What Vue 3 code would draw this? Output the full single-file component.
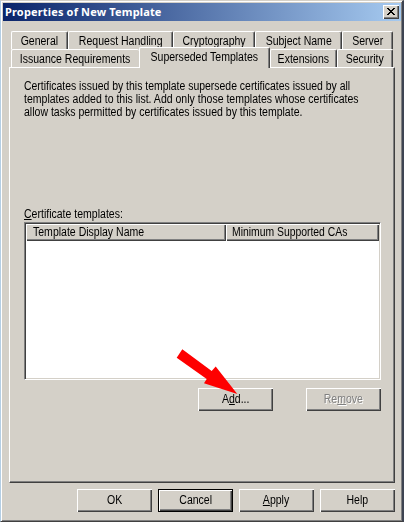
<script setup>
const backTabs = [
  { label: 'General', width: 57 },
  { label: 'Request Handling', width: 105 },
  { label: 'Cryptography', width: 82 },
  { label: 'Subject Name', width: 87 },
  { label: 'Server', width: 51 },
]
const frontTabs = [
  { label: 'Issuance Requirements', width: 128, covered: true },
  { label: 'Superseded Templates', width: 131, active: true },
  { label: 'Extensions', width: 67 },
  { label: 'Security', width: 56 },
]
</script>

<template>
  <div class="dialog">
    <header class="titlebar">
      <span class="title">Properties of New Template</span>
      <button class="close" aria-label="Close">
        <svg width="8" height="7" viewBox="0 0 8 7" shape-rendering="crispEdges">
          <path d="M0 0h2v1h1v1h2v-1h1v-1h2v1h-1v1h-1v1h-1v1h1v1h1v1h1v1h-2v-1h-1v-1h-2v1h-1v1h-2v-1h1v-1h1v-1h1v-1h-1v-1h-1v-1h-1z" fill="#000" />
        </svg>
      </button>
    </header>

    <nav class="tabs">
      <div class="tabrow">
        <div v-for="t in backTabs" :key="t.label" class="tab" :style="{ width: t.width + 'px' }">
          <span class="cap">{{ t.label }}</span>
        </div>
      </div>
      <div class="tabrow">
        <div v-for="t in frontTabs" :key="t.label" class="tab" :class="{ active: t.active, covered: t.covered }" :style="{ width: t.width + 'px' }">
          <span class="cap">{{ t.label }}</span>
        </div>
      </div>
    </nav>

    <main class="panel">
      <p class="intro">
        <span class="cap left l1">Certificates issued by this template supersede certificates issued by all</span>
        <span class="cap left l2">templates added to this list. Add only those templates whose certificates</span>
        <span class="cap left">allow tasks permitted by certificates issued by this template.</span>
      </p>
      <label class="list-label"><span class="cap left"><u>C</u>ertificate templates:</span></label>
      <div class="list">
        <div class="list-head">
          <div class="col first"><span class="cap left">Template Display Name</span></div>
          <div class="col second"><span class="cap left c2">Minimum Supported CAs</span></div>
        </div>
      </div>
      <div class="actions">
        <button class="btn"><span class="cap">A<u>d</u>d...</span></button>
        <button class="btn disabled"><span class="cap">Re<u>m</u>ove</span></button>
      </div>
      <svg class="arrow" width="62" height="47" viewBox="0 0 62 47">
        <path d="M6.3 .3L35.7 22L39.7 17.5L61.3 45L28 34.3L30.7 30L.7 8.7Z" fill="#fe0000" />
      </svg>
    </main>

    <footer class="footer">
      <button class="btn"><span class="cap">OK</span></button>
      <button class="btn default"><span class="cap">Cancel</span></button>
      <button class="btn"><span class="cap"><u>A</u>pply</span></button>
      <button class="btn"><span class="cap">Help</span></button>
    </footer>
  </div>
</template>

<style>
body { margin: 0; background: #d4d0c8; overflow: hidden; }
</style>

<style scoped>
* { box-sizing: border-box; }
.dialog {
  width: 404px; height: 522px; padding: 1px 0 0 2px;
  background: #d4d0c8; color: #000;
  border-left: 1px solid #b4cee4; border-top: 1px solid #d4d0c8;
  border-right: 2px solid #3e4452; border-bottom: 1px solid #404040;
  box-shadow: inset 1px 1px #fff, inset -1px -1px #808080;
  font: 12px/13px "Liberation Sans", Arial, sans-serif;
  white-space: nowrap;
}
.cap { display: inline-block; flex: none; transform: scaleX(.877); }
.cap.left { display: block; width: max-content; transform-origin: left; }
.cap.l1 { transform: scaleX(.87); }
.cap.c2 { transform: scaleX(.865); }
.titlebar {
  width: 398px; height: 18px; margin-top: 1px;
  display: flex; align-items: center; justify-content: space-between;
  padding: 0 2px;
  background: linear-gradient(90deg, #0a246a, #a6caf0);
}
.title { color: #fff; font: bold 11px/16px "Noto Sans", "Open Sans", sans-serif; letter-spacing: .16px; }
button { font: inherit; color: inherit; margin: 0; padding: 0; border: 0; background: #d4d0c8; }
.close {
  width: 16px; height: 14px; display: flex; align-items: center; justify-content: center;
  padding: 0 1px 1px 0;
  box-shadow: inset 1px 1px #fff, inset -1px -1px #404040, inset -2px -2px #808080;
}
.tabs { margin: 10px 0 0 8px; }
.tabrow { display: flex; height: 18px; }
.tab {
  height: 18px; border-top: 1px solid #fff; border-left: 1px solid #fff; border-right: 1px solid #404040;
  border-radius: 2px 2px 0 0; box-shadow: inset -1px 0 #808080;
  display: flex; justify-content: center; padding-top: 3px; background: #d4d0c8;
}
.tab.covered { border-right: 0; box-shadow: none; padding-right: 1px; }
.tab.active { height: 21px; margin-top: -2px; position: relative; z-index: 1; }
.panel {
  position: relative; width: 386px; height: 416px; margin: 0 0 0 6px;
  padding: 12px 13px 0 14px;
  border: 1px solid #fff; border-right-color: #404040; border-bottom-color: #404040;
  box-shadow: inset -1px -1px #808080;
}
.intro { margin: 0; height: 128px; }
.list-label { display: block; height: 14px; }
u { text-decoration: underline; text-underline-offset: 1px; text-decoration-thickness: 1px; text-decoration-skip-ink: none; }
.list {
  width: 357px; height: 158px; background: #fff;
  border: 1px solid #808080; border-right-color: #fff; border-bottom-color: #fff;
  box-shadow: inset 1px 1px #404040, inset -1px -1px #d4d0c8; padding: 1px;
}
.list-head { display: flex; height: 17px; }
.col {
  background: #d4d0c8; padding: 2px 0 0 7px;
  box-shadow: inset 1px 1px #fff, inset -1px -1px #404040, inset -2px -2px #808080;
}
.first { width: 200px; }
.second { width: 153px; padding-left: 6px; }
.actions { display: flex; gap: 33px; margin: 8px 0 0 174px; }
.btn {
  width: 75px; height: 23px; text-align: center;
  box-shadow: inset 1px 1px #fff, inset -1px -1px #404040, inset -2px -2px #808080;
}
.btn.default { border: 1px solid #000; }
.disabled { color: #808080; text-shadow: 1px 1px #fff; }
.arrow { position: absolute; left: 166px; top: 281px; }
.footer { display: flex; gap: 6px; margin: 6px 0 0 74px; }
</style>
